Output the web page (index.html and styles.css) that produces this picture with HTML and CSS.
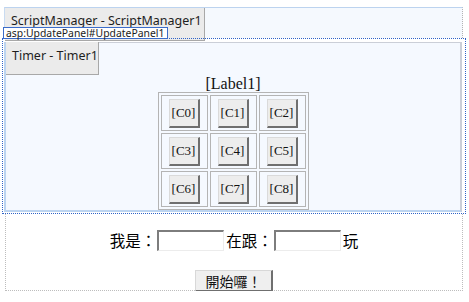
FILE: index.html
```html
<!DOCTYPE html>
<html lang="zh-Hant">
<head>
  <meta charset="UTF-8" />
  <meta name="viewport" content="width=device-width, initial-scale=1.0"/>
  <title>Design View</title>
  <link rel="stylesheet" href="styles.css">
</head>
<body>
  <div class="design">

    <!-- ScriptManager strip -->
    <div class="sm-bar">
      <div class="ctl-box sm-box">ScriptManager - ScriptManager1</div>
    </div>

    <!-- UpdatePanel -->
    <div class="update-panel">
      <span class="panel-tag">asp:UpdatePanel#UpdatePanel1</span>
      <div class="panel-inner">
        <div class="ctl-box timer-box">Timer - Timer1</div>
        <div class="label-line">[Label1]</div>
        <table class="grid">
          <tr>
            <td><button class="cell-btn">[C0]</button></td>
            <td><button class="cell-btn">[C1]</button></td>
            <td><button class="cell-btn">[C2]</button></td>
          </tr>
          <tr>
            <td><button class="cell-btn">[C3]</button></td>
            <td><button class="cell-btn">[C4]</button></td>
            <td><button class="cell-btn">[C5]</button></td>
          </tr>
          <tr>
            <td><button class="cell-btn">[C6]</button></td>
            <td><button class="cell-btn">[C7]</button></td>
            <td><button class="cell-btn">[C8]</button></td>
          </tr>
        </table>
      </div>
    </div>

    <!-- players -->
    <div class="players">
      <div class="player-line">
        <span>我是：</span><input class="name-box" type="text"><span>在跟：</span><input class="name-box" type="text"><span>玩</span>
      </div>
      <button class="start-btn">開始囉！</button>
    </div>

  </div>
</body>
</html>
```

FILE: styles.css
```css
body {
  margin: 0;
  background: #ffffff;
  font-family: "Noto Sans", "Liberation Sans", sans-serif;
  color: #000;
}

.design {
  padding: 7px 3px 0 2px;
}

/* top strip holding the ScriptManager */
.sm-bar {
  margin: 0 3px 0 2px;
  height: 30px;
  background: #f5f9fe;
  border-top: 1px solid #bcd3ef;
  border-left: 1px solid #c9dbf1;
  border-right: 1px dotted #b4b4b4;
}

.ctl-box {
  background: #ebebeb;
  border-right: 1px solid #a8a8a8;
  border-bottom: 1px solid #a8a8a8;
  color: #1e1e1e;
  font-size: 12.5px;
  line-height: 18px;
  padding: 4px 0 0 6px;
  box-sizing: border-box;
}

.sm-box {
  width: 200px;
  height: 33px;
  margin-bottom: -3px;
}

.update-panel {
  position: relative;
  border: 1px dotted #2f63c8;
  padding: 3px 3px 1px 1px;
}

.panel-tag {
  position: absolute;
  left: 0;
  bottom: 100%;
  background: #ffffff;
  border: 1px solid #3b6cc9;
  font-size: 10.4px;
  line-height: 10px;
  padding: 0 3px 0 2px;
  color: #1a1a1a;
  white-space: nowrap;
}

.panel-inner {
  background: #f5f9ff;
  border-top: 1px solid #cbcfd8;
  border-right: 2px solid #cbcfd8;
  border-left: 2px solid #bcd4f0;
  border-bottom: 2px solid #bcd4f0;
  text-align: center;
}

.timer-box {
  width: 93px;
  height: 33px;
  margin-top: -1px;
  padding-top: 5px;
  text-align: left;
}

.label-line {
  font-family: "Liberation Serif", serif;
  font-size: 16px;
  line-height: 17px;
  color: #111;
}

.grid {
  margin: 0 auto;
  border: 1px solid #b4b4b4;
  border-spacing: 2px;
}

.grid td {
  width: 45px;
  height: 34px;
  padding: 0;
  border: 1px solid #b4b4b4;
  text-align: center;
}

.cell-btn {
  width: 31px;
  height: 29px;
  padding: 0;
  background: #ededed;
  border-top: 1px solid #dadada;
  border-left: 1px solid #dadada;
  border-right: 2px solid #6f6f6f;
  border-bottom: 2px solid #6f6f6f;
  font-family: "Liberation Serif", serif;
  font-size: 13px;
  color: #111;
}

.players {
  margin: 0 3px 0 3px;
  border-left: 1px dotted #bdbdbd;
  border-right: 1px dotted #bdbdbd;
  border-bottom: 1px dotted #bdbdbd;
  height: 76px;
  text-align: center;
  font-family: "Noto Sans CJK TC", sans-serif;
}

.player-line {
  padding-top: 16px;
  font-size: 15.5px;
  line-height: 21px;
  height: 21px;
}

.player-line span {
  vertical-align: top;
}

.name-box {
  width: 67px;
  height: 21px;
  box-sizing: border-box;
  margin: 0 2px 0 1px;
  padding: 0;
  vertical-align: top;
  background: #fff;
  border-top: 2px solid #7d7d7d;
  border-left: 2px solid #7d7d7d;
  border-right: 1px solid #ececec;
  border-bottom: 1px solid #ececec;
}

.start-btn {
  margin-top: 19px;
  width: 78px;
  height: 22px;
  padding: 0;
  background: #efefef;
  border-top: 1px solid #d8d8d8;
  border-left: 1px solid #d8d8d8;
  border-right: 2px solid #6f6f6f;
  border-bottom: 2px solid #6f6f6f;
  font-family: "Noto Sans CJK TC", sans-serif;
  font-size: 14px;
  color: #111;
}
```
